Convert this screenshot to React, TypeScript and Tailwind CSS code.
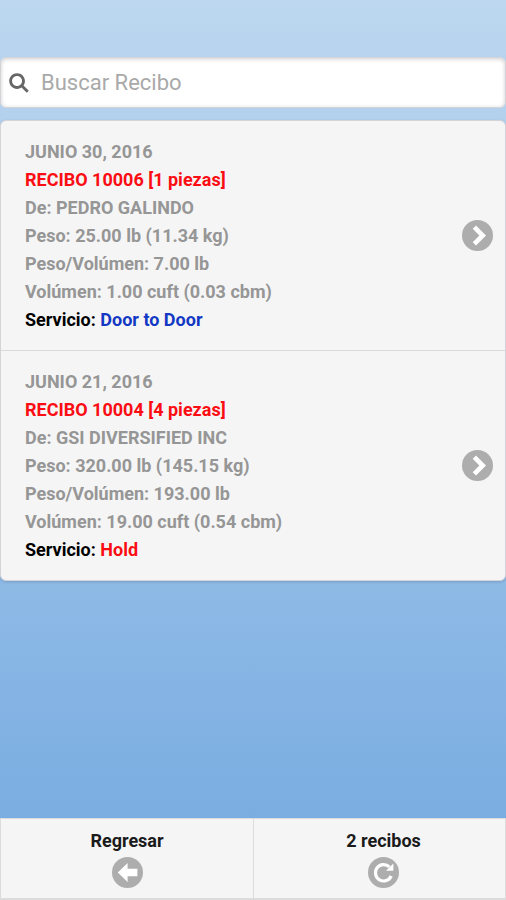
import React, { useState } from "react";
import { clsx } from "clsx";

// ── Types ────────────────────────────────────────────────────

interface Receipt {
  id: number;
  date: string;
  pieces: number;
  from: string;
  weight: string;
  volumeWeight: string;
  volume: string;
  service: string;
  onHold?: boolean;
}

// ── Data ─────────────────────────────────────────────────────

const RECEIPTS: Receipt[] = [
  {
    id: 10006,
    date: "JUNIO 30, 2016",
    pieces: 1,
    from: "PEDRO GALINDO",
    weight: "25.00 lb (11.34 kg)",
    volumeWeight: "7.00 lb",
    volume: "1.00 cuft (0.03 cbm)",
    service: "Door to Door",
  },
  {
    id: 10004,
    date: "JUNIO 21, 2016",
    pieces: 4,
    from: "GSI DIVERSIFIED INC",
    weight: "320.00 lb (145.15 kg)",
    volumeWeight: "193.00 lb",
    volume: "19.00 cuft (0.54 cbm)",
    service: "Hold",
    onHold: true,
  },
];

// ── Icons ────────────────────────────────────────────────────

function SearchIcon() {
  return (
    <svg viewBox="0 0 14 14" className="size-5 shrink-0 fill-[#666]" aria-hidden="true">
      <path d="M10.171,8.766c0.617-0.888,0.979-1.964,0.979-3.126c0-3.037-2.463-5.5-5.5-5.5s-5.5,2.463-5.5,5.5s2.463,5.5,5.5,5.5c1.152,0,2.223-0.355,3.104-0.962l3.684,3.683l1.414-1.414L10.171,8.766z M5.649,9.14c-1.933,0-3.5-1.567-3.5-3.5c0-1.933,1.567-3.5,3.5-3.5c1.933,0,3.5,1.567,3.5,3.5C9.149,7.572,7.582,9.14,5.649,9.14z" />
    </svg>
  );
}

/** Grey disc that the white glyphs sit on */
function Disc({ children }: { children: React.ReactNode }) {
  return (
    <svg viewBox="0 0 31 31" className="size-[31px] shrink-0" aria-hidden="true">
      <circle cx="15.5" cy="15.5" r="15.5" fill="#adadad" />
      {children}
    </svg>
  );
}

const CaretRight = () => (
  <Disc>
    <polygon fill="#fff" points="14,5.5 24,15.5 14,25.5 10.7,22.2 17.4,15.5 10.7,8.8" />
  </Disc>
);

const ArrowLeft = () => (
  <Disc>
    <polygon fill="#fff" points="5.8,15.5 15.6,6 15.6,11.8 25.4,11.8 25.4,19.2 15.6,19.2 15.6,25" />
  </Disc>
);

const Refresh = () => (
  <Disc>
    <path d="M21.4,9.9 A8.2,8.2 0 1 0 23.2,19" fill="none" stroke="#fff" strokeWidth="3.2" />
    <polygon fill="#fff" points="25.4,6.4 25.4,13.8 18,13.8" />
  </Disc>
);

// ── Components ───────────────────────────────────────────────

function ReceiptRow({ receipt }: { receipt: Receipt }) {
  return (
    <li className="border-t border-[#d9d9d9] first:border-t-0">
      <a
        href={`#recibo-${receipt.id}`}
        className="flex items-center justify-between gap-4 py-4 pr-3 pl-6 text-lg/7 font-bold text-[#969696]"
      >
        <div className="min-w-0 pt-px">
          <p>{receipt.date}</p>
          <p className="text-[#fb0d13]">
            RECIBO {receipt.id} [{receipt.pieces} piezas]
          </p>
          <p>De: {receipt.from}</p>
          <p>Peso: {receipt.weight}</p>
          <p>Peso/Volúmen: {receipt.volumeWeight}</p>
          <p>Volúmen: {receipt.volume}</p>
          <p className="text-black">
            Servicio:{" "}
            <span className={clsx(receipt.onHold ? "text-[#fb0d13]" : "text-[#1238c4]")}>
              {receipt.service}
            </span>
          </p>
        </div>
        <CaretRight />
      </a>
    </li>
  );
}

export default function App() {
  const [query, setQuery] = useState("");
  const visible = RECEIPTS.filter((r) =>
    `${r.id} ${r.from}`.toLowerCase().includes(query.toLowerCase()),
  );

  return (
    <div className="flex min-h-screen flex-col bg-linear-to-b from-[#bcd7ef] to-[#74a9e0] font-[Roboto,sans-serif]">
      <main className="flex-1 pt-[57px]">
        <label className="flex h-[51px] items-center gap-3 rounded-md border border-[#d3d3d8] bg-white px-2 shadow-[inset_0_1px_4px_rgba(0,0,0,0.2)]">
          <SearchIcon />
          <input
            type="text"
            aria-label="Buscar Recibo"
            placeholder="Buscar Recibo"
            value={query}
            onChange={(e) => setQuery(e.target.value)}
            className="min-w-0 flex-1 bg-transparent text-[22px] outline-none placeholder:text-[#a9a9a9]"
          />
        </label>

        <ul className="mt-3 rounded-md border border-[#d3d3d8] bg-[#f5f5f5] shadow-[0_1px_3px_rgba(0,0,0,0.15)]">
          {visible.map((r) => (
            <ReceiptRow key={r.id} receipt={r} />
          ))}
        </ul>
      </main>

      <footer className="grid grid-cols-2 border border-b-2 border-[#dcdcdc] bg-[#f5f5f5] text-lg/6 font-bold text-[#1a1a1a]">
        <button type="button" className="flex flex-col items-center gap-1 py-2.5">
          Regresar
          <ArrowLeft />
        </button>
        <button
          type="button"
          className="flex flex-col items-center gap-1 border-l border-[#dcdcdc] py-2.5 pl-2"
        >
          {visible.length} recibos
          <Refresh />
        </button>
      </footer>
    </div>
  );
}
